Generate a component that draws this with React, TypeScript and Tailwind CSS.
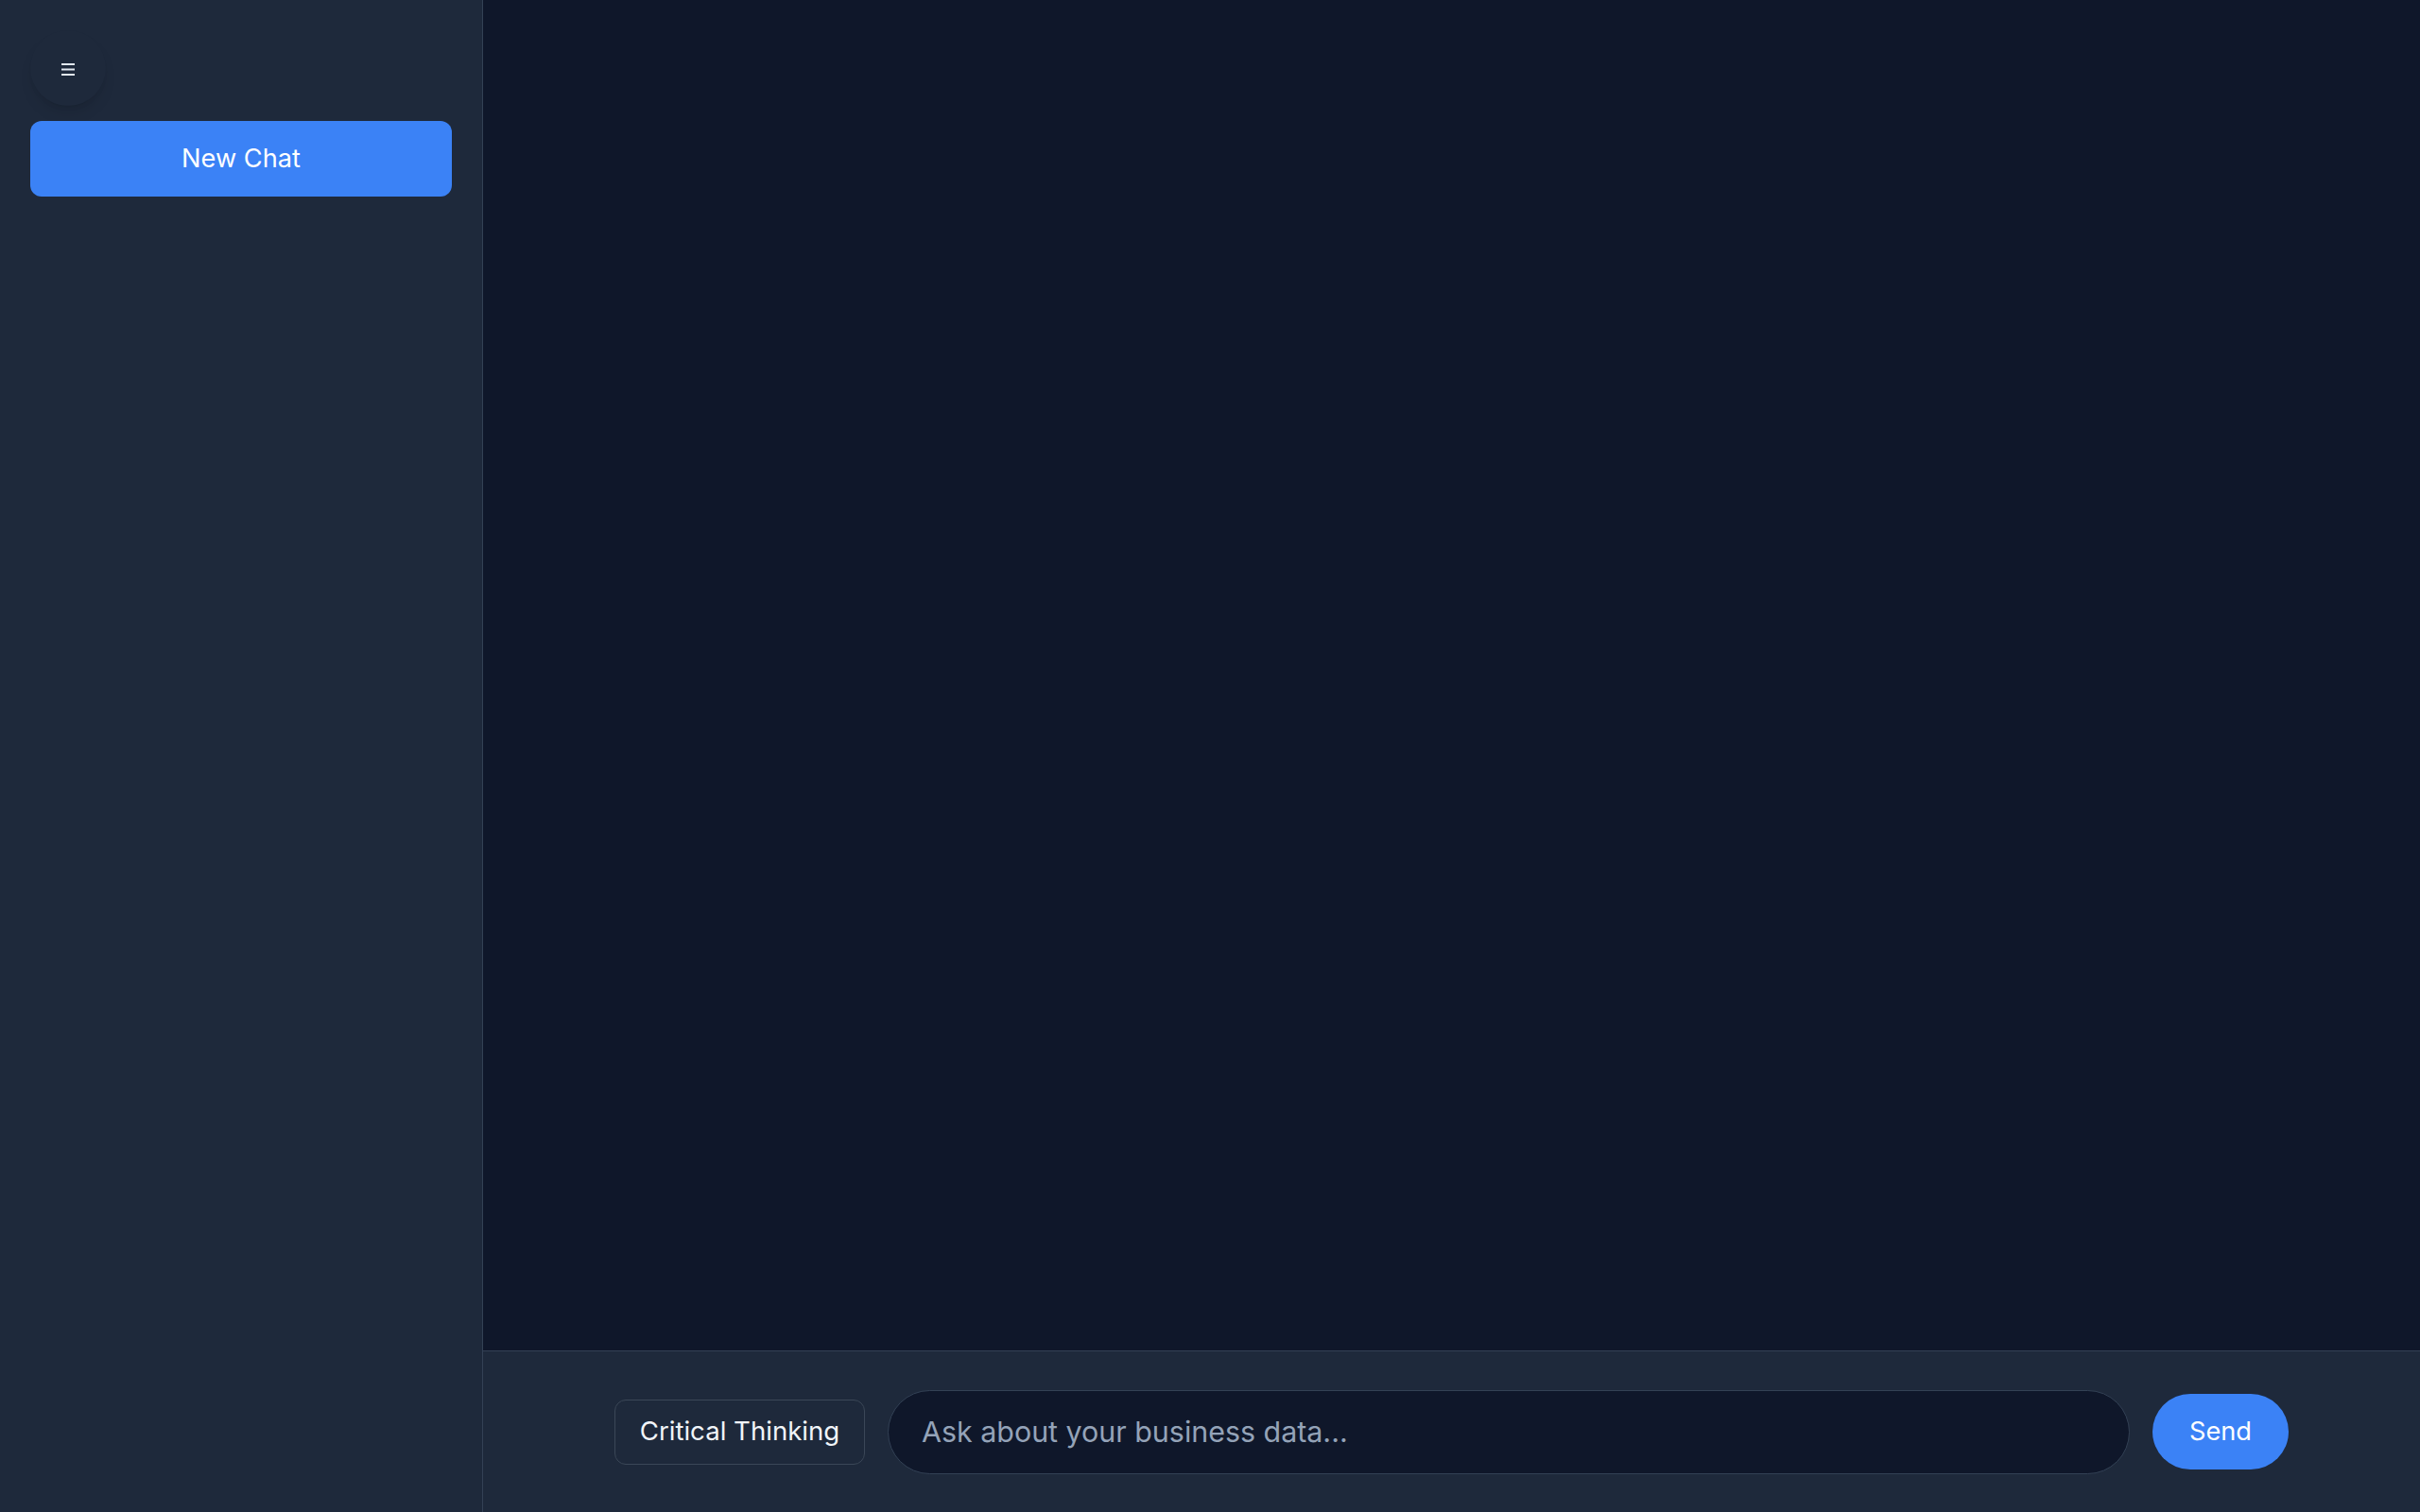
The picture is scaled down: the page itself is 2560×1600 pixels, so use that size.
export default function App() {
  return (
    <div
      className="flex h-[1600px] w-[2560px] bg-[#0f172a] text-[#f1f5f9]"
      style={{ fontFamily: "Inter, 'Noto Sans', sans-serif" }}
    >
      <aside className="flex w-[511px] shrink-0 flex-col gap-4 border-r border-[#334155] bg-[#1e293b] p-8">
        <button className="flex h-20 w-20 items-center justify-center rounded-full bg-[#1e293b] shadow-lg">
          <svg width="14" height="14" viewBox="0 0 14 14" className="mt-[3px]">
            <rect x="0" y="0" width="14" height="2" fill="#e2e8f0" />
            <rect x="0" y="5.5" width="14" height="2" fill="#e2e8f0" />
            <rect x="0" y="11" width="14" height="2" fill="#e2e8f0" />
          </svg>
        </button>
        <button className="h-20 w-full rounded-xl bg-[#3b82f6] text-[27.2px] text-white">
          New Chat
        </button>
      </aside>

      <main className="flex flex-1 flex-col">
        <div className="flex-1" />
        <div className="flex h-[171px] items-center border-t border-[#334155] bg-[#1e293b] px-[139px]">
          <div className="flex w-full items-center gap-6">
            <button className="h-[69px] w-[265px] shrink-0 rounded-xl border border-[#3b4757] bg-[#1e293b] text-[27.6px] text-[#f1f5f9]">
              Critical Thinking
            </button>
            <input
              className="h-[89px] flex-1 rounded-full border border-[#334155] bg-[#0f172a] px-[35px] text-[30.4px] text-[#f1f5f9] outline-none placeholder:text-[#94a3b8]"
              placeholder="Ask about your business data..."
            />
            <button className="h-20 w-[144px] shrink-0 rounded-full bg-[#3b82f6] text-[27.2px] text-white">
              Send
            </button>
          </div>
        </div>
      </main>
    </div>
  );
}
